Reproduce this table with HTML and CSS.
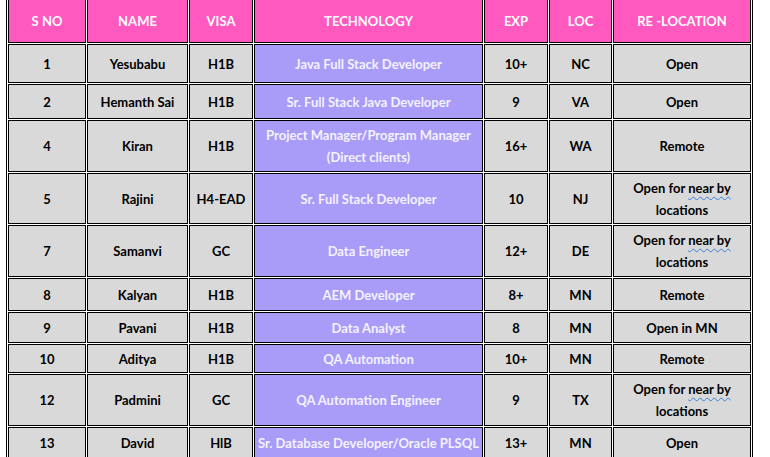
FILE: index.html
```html
<!DOCTYPE html>
<html>
<head>
<meta charset="utf-8">
<link rel="stylesheet" href="styles.css">
</head>
<body>
<table class="grid">
  <thead>
    <tr class="r-head">
      <th class="c-sno">S NO</th>
      <th class="c-name">NAME</th>
      <th class="c-visa">VISA</th>
      <th class="c-tech">TECHNOLOGY</th>
      <th class="c-exp">EXP</th>
      <th class="c-loc">LOC</th>
      <th class="c-rel">RE -LOCATION</th>
    </tr>
  </thead>
  <tbody>
    <tr class="r39"><td>1</td><td>Yesubabu</td><td>H1B</td><td class="tech">Java Full Stack Developer</td><td>10+</td><td>NC</td><td>Open</td></tr>
    <tr class="r35"><td>2</td><td>Hemanth Sai</td><td>H1B</td><td class="tech">Sr. Full Stack Java Developer</td><td>9</td><td>VA</td><td>Open</td></tr>
    <tr class="r52"><td>4</td><td>Kiran</td><td>H1B</td><td class="tech">Project Manager/Program Manager<br>(Direct clients)</td><td>16+</td><td>WA</td><td>Remote</td></tr>
    <tr class="r51"><td>5</td><td>Rajini</td><td>H4-EAD</td><td class="tech">Sr. Full Stack Developer</td><td>10</td><td>NJ</td><td>Open for <span class="sq">near by</span><br>locations</td></tr>
    <tr class="r52"><td>7</td><td>Samanvi</td><td>GC</td><td class="tech">Data Engineer</td><td>12+</td><td>DE</td><td>Open for <span class="sq">near by</span><br>locations</td></tr>
    <tr class="r33"><td>8</td><td>Kalyan</td><td>H1B</td><td class="tech">AEM Developer</td><td>8+</td><td>MN</td><td>Remote</td></tr>
    <tr class="r31"><td>9</td><td>Pavani</td><td>H1B</td><td class="tech">Data Analyst</td><td>8</td><td>MN</td><td>Open in MN</td></tr>
    <tr class="r29"><td>10</td><td>Aditya</td><td>H1B</td><td class="tech">QA Automation</td><td>10+</td><td>MN</td><td>Remote</td></tr>
    <tr class="r52"><td>12</td><td>Padmini</td><td>GC</td><td class="tech">QA Automation Engineer</td><td>9</td><td>TX</td><td>Open for <span class="sq">near by</span><br>locations</td></tr>
    <tr class="r31"><td>13</td><td>David</td><td>HlB</td><td class="tech">Sr. Database Developer/Oracle PLSQL</td><td>13+</td><td>MN</td><td>Open</td></tr>
  </tbody>
</table>
</body>
</html>
```

FILE: styles.css
```css
html, body {
  margin: 0;
  padding: 0;
  background: #ffffff;
}

body {
  font-family: Lato, "Open Sans", sans-serif;
  font-weight: 700;
  font-size: 13px;
  color: #000000;
}

.grid {
  margin: -3px 0 0 6px;
  border: 1px solid #000;
  border-collapse: separate;
  border-spacing: 1px;
  table-layout: fixed;
  width: 747px;
}

.grid th,
.grid td {
  box-sizing: border-box;
  border: 1px solid #000;
  padding: 0 2px;
  text-align: center;
  vertical-align: middle;
  line-height: 22px;
  white-space: nowrap;
}

.grid th {
  background: #ff58bf;
  color: #ffffff;
  font-weight: 700;
}

.grid td {
  background: #d9d9d9;
}

.grid td.tech {
  background: #a99cf9;
  color: #f4f2ff;
}

.c-sno { width: 78px; }
.c-name { width: 101px; }
.c-visa { width: 64px; }
.c-tech { width: 229px; }
.c-exp { width: 64px; }
.c-loc { width: 63px; }
.c-rel { width: 138px; }

.r-head { height: 44px; }
.r39 { height: 39px; }
.r35 { height: 35px; }
.r52 { height: 52px; }
.r51 { height: 51px; }
.r33 { height: 33px; }
.r31 { height: 31px; }
.r29 { height: 29px; }

.sq {
  text-decoration: underline wavy #3b7ddd;
  text-decoration-thickness: 1px;
  text-underline-offset: 3px;
}
```
